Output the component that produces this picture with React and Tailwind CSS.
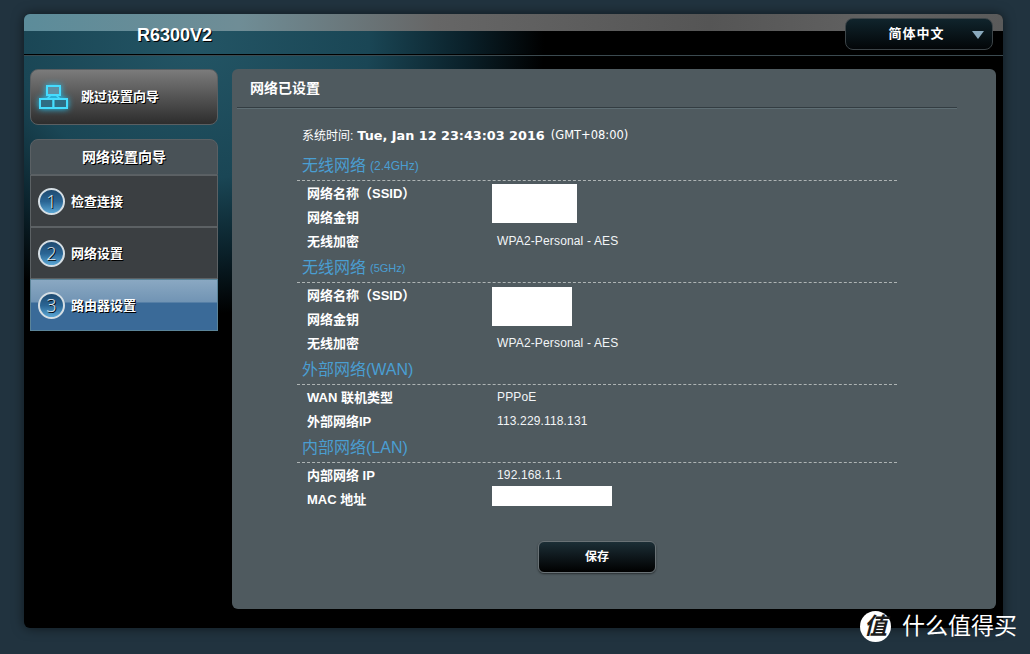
import React from 'react';

const sections = [
  {
    title: '无线网络',
    suffix: '(2.4GHz)',
    suffixClass: 'text-xs',
    rows: [
      { label: '网络名称（SSID）', blank: 'w-[85px] h-[39px] row-span-2 mt-[3px]' },
      { label: '网络金钥' },
      { label: '无线加密', value: 'WPA2-Personal - AES' },
    ],
  },
  {
    title: '无线网络',
    suffix: '(5GHz)',
    suffixClass: 'text-[11px]',
    rows: [
      { label: '网络名称（SSID）', blank: 'w-[80px] h-[39px] row-span-2 mt-[4px]' },
      { label: '网络金钥' },
      { label: '无线加密', value: 'WPA2-Personal - AES' },
    ],
  },
  {
    title: '外部网络(WAN)',
    rows: [
      { label: 'WAN 联机类型', value: 'PPPoE' },
      { label: '外部网络IP', value: '113.229.118.131' },
    ],
  },
  {
    title: '内部网络(LAN)',
    rows: [
      { label: '内部网络 IP', value: '192.168.1.1' },
      { label: 'MAC 地址', blank: 'w-[120px] h-5 mt-[-1px]' },
    ],
  },
];

const steps = [
  { n: 1, label: '检查连接' },
  { n: 2, label: '网络设置' },
  { n: 3, label: '路由器设置', active: true },
];

function NetworkIcon() {
  return (
    <svg width="30" height="24" viewBox="0 0 30 24" fill="#2f6c84" stroke="#45dcff" strokeWidth="2" className="shrink-0 drop-shadow-[0_0_3px_#1fc4f5]">
      <rect x="8" y="1" width="13" height="9" fill="#5f8fa3" />
      <path d="M12 10L8 14M17 10L21 14" fill="none" strokeWidth="1.5" />
      <rect x="1" y="14" width="13.5" height="9" />
      <rect x="14.5" y="14" width="13.5" height="9" />
    </svg>
  );
}

function StepBadge({ n }) {
  return (
    <div className="w-[27px] h-[27px] shrink-0 rounded-full border-2 border-[#d5dee4] bg-[linear-gradient(180deg,#1f4a70_0%,#2a6594_50%,#5aa6d4_100%)] flex items-center justify-center text-[18px] leading-none font-light text-[#e2e9ed] font-['Open_Sans',sans-serif]">
      {n}
    </div>
  );
}

function Section({ section }) {
  return (
    <div>
      <div className="h-[30px] border-b border-dashed border-[#aeb4b4] pl-[5px] pt-[1px] flex items-center gap-1 text-base text-[#4a9ed2]">
        <span>{section.title}</span>
        {section.suffix && <span className={section.suffixClass}>{section.suffix}</span>}
      </div>
      <div className="grid grid-cols-[195px_1fr] auto-rows-[24px] items-center">
        {section.rows.map((row) => (
          <React.Fragment key={row.label}>
            <div className="col-start-1 pl-[10px] pt-[1px] text-[13px] font-bold text-white">{row.label}</div>
            {row.value && <div className="col-start-2 pl-[5px] text-xs tracking-[0.15px] text-[#f2f5f7]">{row.value}</div>}
            {row.blank && <div className={`col-start-2 self-start bg-white ${row.blank}`}></div>}
          </React.Fragment>
        ))}
      </div>
    </div>
  );
}

export default function App() {
  return (
    <div className="relative w-[1030px] h-[654px] overflow-hidden bg-[#21333f] pt-[14px] pl-[24px] font-['Liberation_Sans','Noto_Sans_CJK_SC',sans-serif]">
      <div className="relative w-[979px] h-[614px] rounded-md shadow-[0_0_12px_rgba(0,0,0,0.55)] overflow-hidden bg-black bg-[radial-gradient(ellipse_350px_270px_at_170px_30px,#235565_0%,#1a4655_50%,#0a2029_78%,#000_100%)]">
        <div className="absolute top-0 left-0 right-0 h-[17px] bg-[linear-gradient(90deg,#5c8c9a_0%,#6f8d96_22%,#666_42%,#555_70%,#626262_88%,#5a5a5a_100%)]"></div>

        <header className="relative h-[41px] border-b border-black flex items-start justify-between pl-[113px] pr-[10px] shadow-[0_1px_0_#3b4a50]">
          <h1 className="mt-[10px] text-lg leading-[22px] font-bold text-white [text-shadow:1px_1px_0_#000]">R6300V2</h1>
          <button className="relative mt-1 w-[148px] h-8 rounded-lg border border-[#3c4448] bg-[linear-gradient(180deg,#10242c,#030608)] text-[13px] font-bold tracking-[1px] text-white pr-[5px]">
            简体中文
            <span className="absolute right-2 top-[12px] w-0 h-0 border-x-[6px] border-x-transparent border-t-[8px] border-t-[#8aa9bd]"></span>
          </button>
        </header>

        <div className="relative flex gap-[14px] pt-[14px] pl-[6px]">
          <aside className="w-[188px] shrink-0">
            <button className="w-full h-[56px] rounded-lg border border-[#5a5f62] bg-[linear-gradient(180deg,#7b7b7b,#2d2d2d)] flex items-center pl-2 gap-3 text-[13px] font-bold text-white [text-shadow:1px_1px_0_#000]">
              <NetworkIcon />
              跳过设置向导
            </button>

            <div className="mt-[14px] text-[13px] font-bold text-white [text-shadow:1px_1px_0_#000]">
              <div className="h-[36px] rounded-t-lg border border-[#5a6064] bg-[#495257] flex items-center justify-center text-sm">网络设置向导</div>
              {steps.map((step) => (
                <div
                  key={step.n}
                  className={
                    step.active
                      ? 'h-[52px] border border-[#5b8499] bg-[linear-gradient(180deg,#8aa8c2_0%,#7194b4_44%,#3a6a98_46%,#3a6a98_100%)] flex items-center pl-[7px] gap-[6px]'
                      : 'h-[52px] border border-[#5c6164] bg-[#3b3f42] flex items-center pl-[7px] gap-[6px]'
                  }
                >
                  <StepBadge n={step.n} />
                  <span className="pt-[1px]">{step.label}</span>
                </div>
              ))}
            </div>
          </aside>

          <main className="w-[764px] h-[540px] rounded-md bg-[#4f5a5f]">
            <div className="ml-[5px] w-[720px] h-[39px] pl-[13px] border-b border-[#333d42] shadow-[0_1px_0_#5f6e74] flex items-center text-sm font-bold text-white">网络已设置</div>

            <div className="h-[43px] pl-[70px] pt-[12px] flex items-center text-xs text-white">
              <span>系统时间:</span>
              <span className="ml-[4px] text-[12.8px] font-bold font-['DejaVu_Sans','Noto_Sans_CJK_SC',sans-serif]">Tue, Jan 12 23:43:03 2016</span>
              <span className="ml-[6px] text-[11.5px] font-['DejaVu_Sans','Noto_Sans_CJK_SC',sans-serif]">(GMT+08:00)</span>
            </div>

            <div className="ml-[65px] w-[600px]">
              {sections.map((section, i) => (
                <Section key={i} section={section} />
              ))}
            </div>

            <button className="block ml-[306px] mt-[30px] w-[118px] h-8 rounded-md border border-[#6a7276] bg-[linear-gradient(180deg,#1c2e36,#000)] text-xs font-bold text-white shadow-[0_1px_2px_rgba(0,0,0,0.5)]">保存</button>
          </main>
        </div>
      </div>

      <div className="absolute left-[860px] top-[611px] flex items-center gap-[11px] text-white">
        <div className="w-[31px] h-[31px] rounded-full bg-white flex items-center justify-center text-[23px] leading-none font-bold text-[#1c1c1c] italic">值</div>
        <span className="text-[23px] leading-[31px] font-normal">什么值得买</span>
      </div>
    </div>
  );
}
